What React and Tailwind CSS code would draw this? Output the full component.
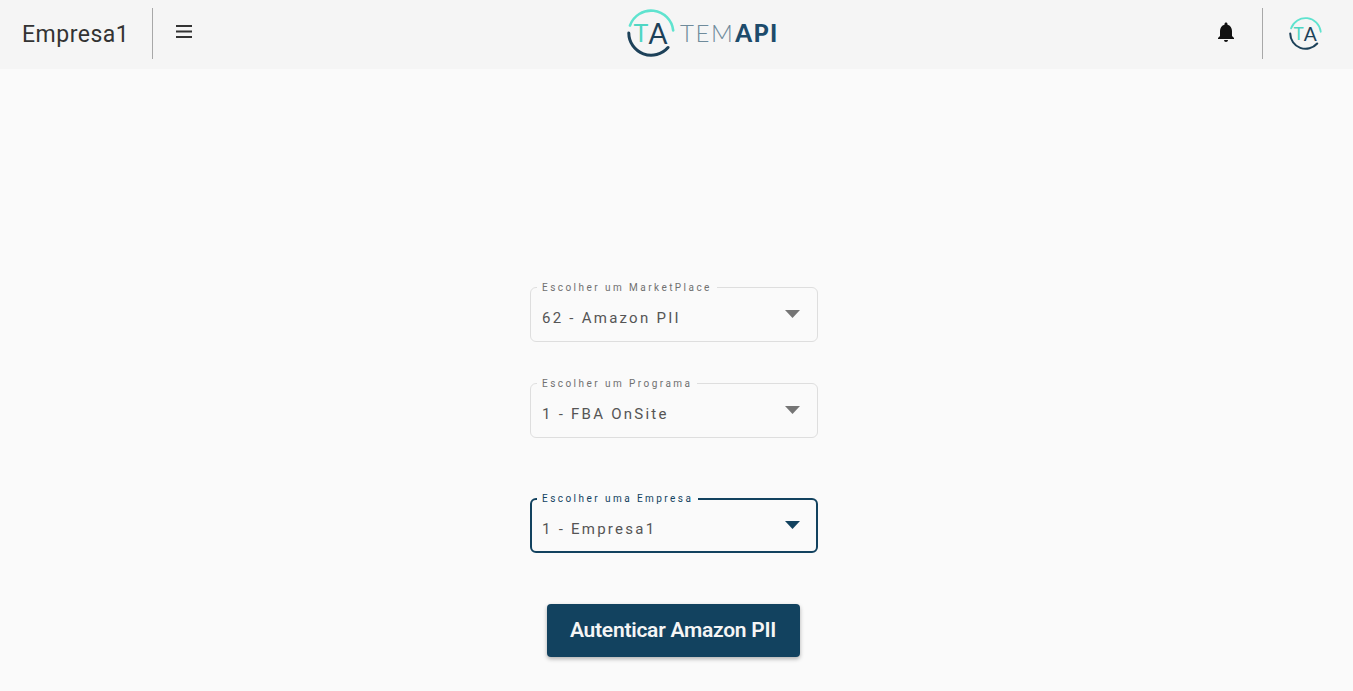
import { MdNotifications } from "react-icons/md";

function LogoMark({ className }) {
  return (
    <svg className={className} viewBox="0 0 48 48" fill="none">
      <path d="M3 16.5 A22.3 22.3 0 0 1 46.2 21.5" stroke="#5fe3cf" strokeWidth="2.6" strokeLinecap="round" />
      <path d="M1.8 24 A22.3 22.3 0 0 0 41 38.5" stroke="#1d4159" strokeWidth="3" strokeLinecap="round" />
      <text x="6.5" y="33" fontSize="25" fontFamily="Lato, sans-serif" fill="#4fd6c3">
        T
      </text>
      <text x="21.5" y="34.5" fontSize="28" fontFamily="Lato, sans-serif" fill="#1d4159">
        A
      </text>
    </svg>
  );
}

function SelectField({ label, value, active }) {
  return (
    <fieldset
      className={
        active
          ? "m-0 flex h-[60px] w-[288px] flex-col rounded-[6px] border-2 border-[#12425f] pl-[5px] pr-[16px]"
          : "m-0 flex h-[60px] w-[288px] flex-col rounded-[6px] border border-[#dedede] pl-[6px] pr-[17px]"
      }
    >
      <legend
        className={
          active
            ? "h-[11px] px-[5px] text-[10px] leading-[11px] tracking-[2.45px] text-[#12425f]"
            : "h-[11px] px-[5px] text-[10px] leading-[11px] tracking-[2.45px] text-[#707070]"
        }
      >
        {label}
      </legend>
      <div className="flex items-start justify-between pl-[5px]">
        <span className="mt-[15px] text-[15px] leading-[20px] tracking-[2.25px] text-[#555555]">{value}</span>
        <svg className="mt-[17px] h-[8px] w-[15px]" viewBox="0 0 15 8">
          <path d="M0 0h15L7.5 8z" fill={active ? "#12425f" : "#757575"} />
        </svg>
      </div>
    </fieldset>
  );
}

export default function App() {
  return (
    <div className="flex min-h-[691px] flex-col bg-[#fafafa] font-['Roboto',sans-serif]">
      <header className="flex h-[69px] items-center bg-[#f5f5f5] pl-[22px] pr-[31px]">
        <div className="flex flex-1 items-center">
          <span className="text-[23px] leading-[32px] tracking-[0.5px] text-[#333333]">Empresa1</span>
          <div className="mb-[2px] ml-[23px] h-[51px] w-px bg-[#a8a8a8]" />
          <svg className="mb-[7px] ml-[23px] h-[13px] w-[16px]" viewBox="0 0 16 13" fill="#333333">
            <path d="M0 0h16v2H0zM0 5.5h16v2H0zM0 11h16v2H0z" />
          </svg>
        </div>
        <div className="mb-[4px] ml-[62px] flex items-center">
          <LogoMark className="h-[48px] w-[48px]" />
          <span className="ml-[5px] font-['Lato',sans-serif] text-[24px] font-light leading-none tracking-[1.5px] text-[#6f8b9b]">
            TEM
          </span>
          <span className="ml-[1px] font-['Lato',sans-serif] text-[24px] font-black leading-none tracking-[1.5px] text-[#1d4b6b]">
            API
          </span>
        </div>
        <div className="flex flex-1 items-center justify-end">
          <MdNotifications className="mb-[5px] text-[#111111]" size={24} />
          <div className="mb-[2px] ml-[24px] h-[51px] w-px bg-[#a8a8a8]" />
          <LogoMark className="mb-[3px] ml-[26px] h-[33px] w-[33px]" />
        </div>
      </header>
      <main className="flex flex-col items-center pr-[5px] pt-[213px]">
        <SelectField label="Escolher um MarketPlace" value="62 - Amazon PII" />
        <div className="mt-[36px]">
          <SelectField label="Escolher um Programa" value="1 - FBA OnSite" />
        </div>
        <div className="mt-[55px]">
          <SelectField label="Escolher uma Empresa" value="1 - Empresa1" active />
        </div>
        <button className="mt-[51px] h-[53px] w-[253px] -translate-x-px rounded-[4px] bg-[#12425f] text-[21px] font-semibold tracking-[-0.25px] text-[#f5f5f5] shadow-[0_2px_4px_rgba(0,0,0,0.3)]">
          Autenticar Amazon PII
        </button>
      </main>
    </div>
  );
}
